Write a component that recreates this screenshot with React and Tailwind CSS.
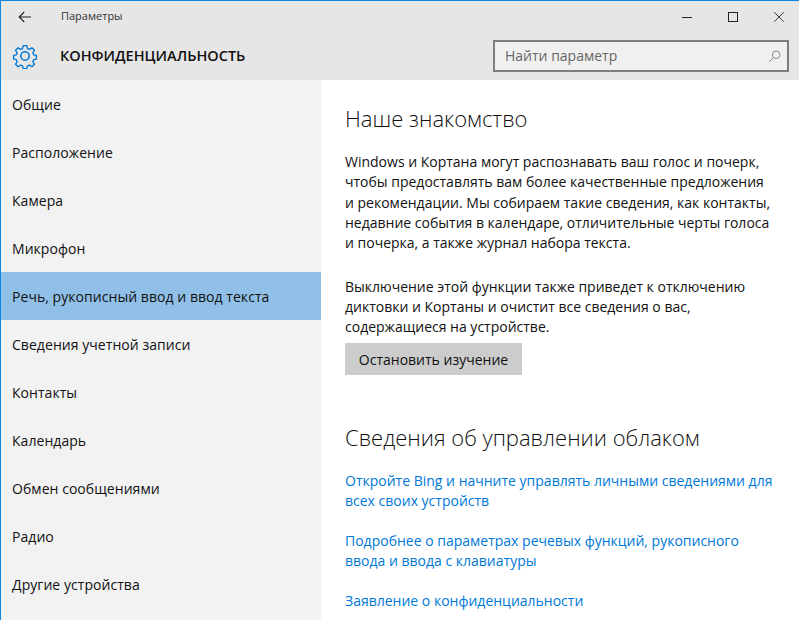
const items = [
    'Общие',
    'Расположение',
    'Камера',
    'Микрофон',
    'Речь, рукописный ввод и ввод текста',
    'Сведения учетной записи',
    'Контакты',
    'Календарь',
    'Обмен сообщениями',
    'Радио',
    'Другие устройства',
];

function Gear() {
    return (
        <svg width="26" height="26" viewBox="0 0 26 26" fill="none" stroke="#0078d7" strokeWidth="1.5" strokeLinejoin="round">
            <circle cx="13" cy="13" r="4.2" />
            <path d="M11 1.5h4l.7 3.3 2.2.9 2.8-1.8 2.8 2.8-1.8 2.8.9 2.2 3 .7v4l-3 .7-.9 2.2 1.8 2.8-2.8 2.8-2.8-1.8-2.2.9-.7 3h-4l-.7-3-2.2-.9-2.8 1.8-2.8-2.8 1.8-2.8-.9-2.2-3-.7v-4l3-.7.9-2.2-1.8-2.8 2.8-2.8 2.8 1.8 2.2-.9z" transform="translate(1.3 1.3) scale(0.9)" />
        </svg>
    );
}

function Arrow() {
    return (
        <svg width="14" height="12" viewBox="0 0 14 12" fill="none" stroke="#222" strokeWidth="1.1">
            <path d="M13 6H1.2M6.2 1 1.2 6l5 5" />
        </svg>
    );
}

function Lens() {
    return (
        <svg width="13" height="13" viewBox="0 0 13 13" fill="none" stroke="#888" strokeWidth="1">
            <circle cx="8.2" cy="4.8" r="3.8" />
            <path d="M5.5 7.5 1 12" />
        </svg>
    );
}

export default function App() {
    return (
        <div className="w-[799px] h-[620px] overflow-hidden flex flex-col bg-white border-t border-l border-[#0f86e0] text-[#111] font-['Open_Sans',sans-serif]">
            <header className="h-[79px] shrink-0 bg-[#e6e6e6] flex flex-col">
                <div className="h-[31px] flex items-center">
                    <div className="ml-[17px] flex"><Arrow /></div>
                    <span className="ml-[29px] text-[11px] text-[#333]">Параметры</span>
                    <div className="ml-auto flex items-center">
                        <svg width="10" height="10" viewBox="0 0 10 10" className="mr-[36px]"><path d="M0 5.5h10" stroke="#222" /></svg>
                        <svg width="10" height="10" viewBox="0 0 10 10" className="mr-[36px]"><rect x=".5" y=".5" width="9" height="9" fill="none" stroke="#222" /></svg>
                        <svg width="10" height="10" viewBox="0 0 10 10" className="mr-[15px]"><path d="M.3.3l9.4 9.4M9.7.3.3 9.7" stroke="#222" strokeWidth=".9" fill="none" /></svg>
                    </div>
                </div>
                <div className="flex-1 flex items-center">
                    <div className="ml-[11px]"><Gear /></div>
                    <span className="ml-[22px] text-[14.5px] font-semibold text-[#111]">КОНФИДЕНЦИАЛЬНОСТЬ</span>
                    <div className="ml-auto mr-[10px] w-[296px] h-[32px] bg-[#f0f0f0] border-2 border-[#7d7d7d] flex items-center pl-[10px] pr-[6px]">
                        <span className="text-[14px] text-[#666] pb-[2px]">Найти параметр</span>
                        <div className="ml-auto flex"><Lens /></div>
                    </div>
                </div>
            </header>
            <div className="flex-1 flex min-h-0">
                <nav className="w-[320px] shrink-0 bg-[#f2f2f2]">
                    {items.map((item, i) => (
                        <div key={item} className={'h-[48px] flex items-center pl-[11px] text-[14px] tracking-[0.05px] ' + (i === 4 ? 'bg-[#90c0e8]' : '')}>
                            {item}
                        </div>
                    ))}
                </nav>
                <main className="flex-1 pl-[24px] pr-[24px] pt-[22px]">
                    <h1 className="text-[22px] leading-[32px] font-light text-[#111]">Наше знакомство</h1>
                    <p className="mt-[18px] text-[14px] leading-[20.25px]">
                        Windows и Кортана могут распознавать ваш голос и почерк, чтобы предоставлять вам более качественные предложения и рекомендации. Мы собираем такие сведения, как контакты, недавние события в календаре, отличительные черты голоса и почерка, а также журнал набора текста.
                    </p>
                    <p className="mt-[24px] text-[14px] leading-[20px]">
                        Выключение этой функции также приведет к отключению диктовки и Кортаны и очистит все сведения о вас, содержащиеся на устройстве.
                    </p>
                    <button className="mt-[6px] block h-[32px] w-[177px] pt-[1px] bg-[#cccccc] text-[14px] text-[#111]">Остановить изучение</button>
                    <h2 className="mt-[46px] text-[22px] leading-[32px] font-light text-[#111]">Сведения об управлении облаком</h2>
                    <div className="mt-[18px] flex flex-col gap-[20px] text-[14px] leading-[20px] text-[#0078d7]">
                        <a>Откройте Bing и начните управлять личными сведениями для всех своих устройств</a>
                        <a>Подробнее о параметрах речевых функций, рукописного ввода и ввода с клавиатуры</a>
                        <a>Заявление о конфиденциальности</a>
                    </div>
                </main>
            </div>
        </div>
    );
}
